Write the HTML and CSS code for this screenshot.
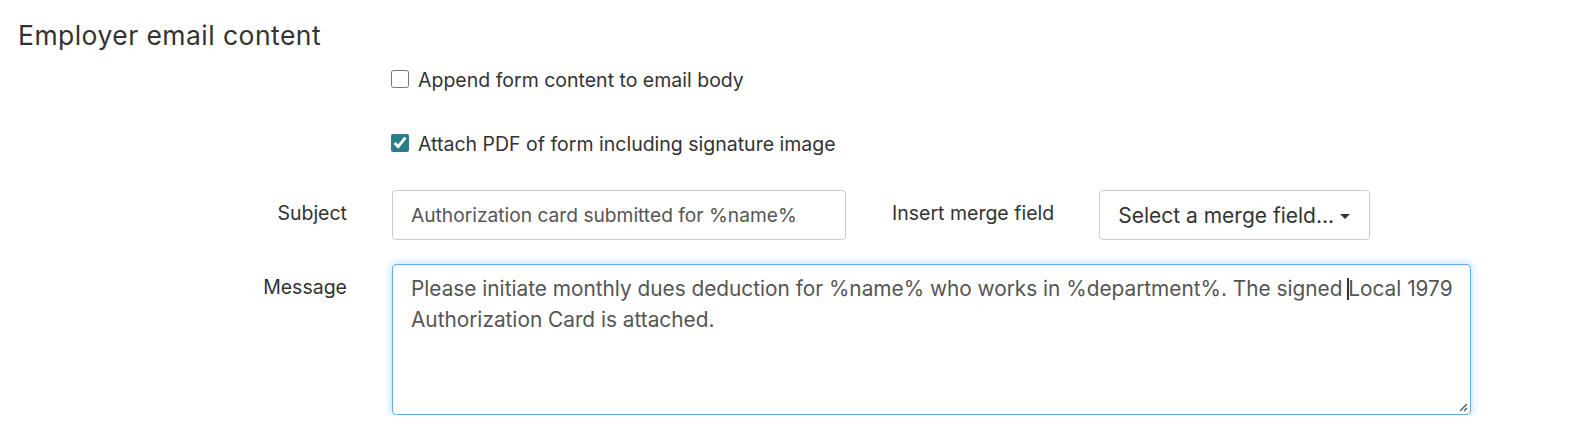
FILE: index.html
```html
<!DOCTYPE html>
<html lang="en">
<head>
<meta charset="utf-8">
<title>Employer email content</title>
<link rel="stylesheet" href="styles.css">
</head>
<body>
<section class="panel">
  <h2 class="panel-title">Employer email content</h2>
  <div class="form">
    <div class="row check-row">
      <div class="label-col"></div>
      <label class="check"><input type="checkbox" class="check-box"><span>Append form content to email body</span></label>
    </div>
    <div class="row check-row second">
      <div class="label-col"></div>
      <label class="check"><input type="checkbox" class="check-box" checked><span>Attach PDF of form including signature image</span></label>
    </div>
    <div class="row field-row">
      <div class="label-col"><span class="field-label">Subject</span></div>
      <div class="controls">
        <div class="input subject">Authorization card submitted for %name%</div>
        <span class="field-label merge-label">Insert merge field</span>
        <button class="select-btn" type="button">Select a merge field... <span class="caret"></span></button>
      </div>
    </div>
    <div class="row field-row message-row">
      <div class="label-col"><span class="field-label">Message</span></div>
      <div class="textarea">Please initiate monthly dues deduction for %name% who works in %department%. The signed <span class="cursor"></span>Local&nbsp;1979 Authorization Card is attached.<svg class="grip" width="12" height="12" viewBox="0 0 12 12"><path d="M11 4 L4 11 M11 8 L8 11" stroke="#555" stroke-width="1.3" fill="none"/></svg></div>
    </div>
  </div>
</section>
</body>
</html>
```
FILE: styles.css
```css
* { box-sizing: border-box; }
html, body { margin: 0; padding: 0; background: #fff; }
body {
  font-family: Inter, "Noto Sans", "Liberation Sans", sans-serif;
  color: #333;
  font-size: 19.5px;
}
.panel { padding: 20px 0 0 18px; }
.panel-title {
  margin: 0;
  font-size: 26.5px;
  font-weight: 400;
  letter-spacing: 0.45px;
  line-height: 30px;
  color: #333;
}
.form { margin-top: 16px; }
.row { display: flex; }
.label-col {
  width: 329px;
  flex: none;
  margin-right: 45px;
  text-align: right;
}
.check-row { height: 26px; align-items: center; }
.check-row.second { margin-top: 38px; }
.check { display: flex; align-items: center; gap: 9px; line-height: 26px; color: #333; padding-top: 2px; }
.check-box {
  margin: -2px 0 0 -1px;
  width: 18px;
  height: 18px;
  accent-color: #2a7c8b;
}
.field-row { margin-top: 34px; align-items: flex-start; }
.message-row { margin-top: 24px; }
.field-label { display: inline-block; padding-top: 10px; line-height: 26px; color: #333; }
.controls { display: flex; align-items: flex-start; }
.input {
  width: 454px;
  height: 50px;
  border: 1px solid #ccc;
  border-radius: 4px;
  padding: 0 18px;
  font-size: 19.2px;
  line-height: 48px;
  color: #555;
}
.merge-label { margin-left: 46px; margin-right: 45px; }
.select-btn {
  width: 271px;
  height: 50px;
  border: 1px solid #ccc;
  border-radius: 4px;
  background: #fff;
  font: inherit;
  font-size: 21px;
  color: #333;
  padding: 0 18px;
  text-align: left;
  display: flex;
  align-items: center;
  white-space: nowrap;
}
.caret {
  display: inline-block;
  margin-left: 6px;
  width: 0;
  height: 0;
  border-left: 5px solid transparent;
  border-right: 5px solid transparent;
  border-top: 5px solid #333;
  margin-top: 2px;
}
.textarea {
  position: relative;
  width: 1079px;
  height: 151px;
  border: 1px solid #66afe9;
  border-radius: 4px;
  box-shadow: inset 0 1px 1px rgba(0,0,0,.075), 0 0 8px rgba(102,175,233,.5);
  padding: 8px 8px 8px 18px;
  font-size: 20.8px;
  line-height: 31px;
  color: #555;
}
.cursor {
  position: relative;
  display: inline-block;
  width: 0;
  height: 0;
}
.cursor::after {
  content: "";
  position: absolute;
  left: -1px;
  top: -18px;
  height: 22px;
  border-left: 2px solid #333;
}
.grip { position: absolute; right: 2px; bottom: 2px; }
```
